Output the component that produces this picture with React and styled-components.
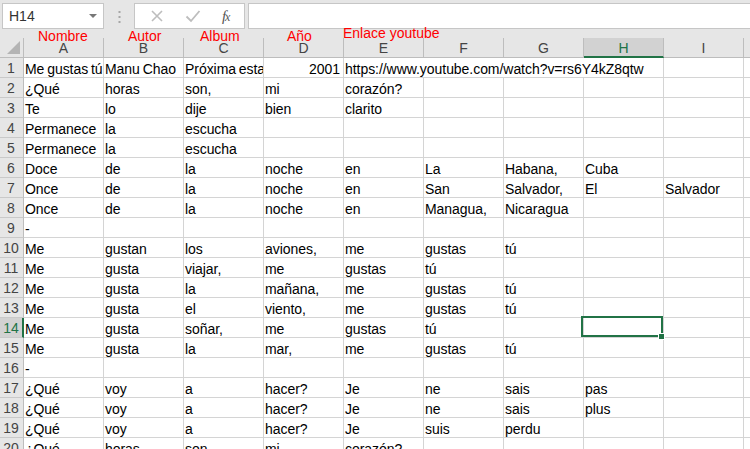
import React from "react";
import styled, { createGlobalStyle, css } from "styled-components";

const GlobalStyle = createGlobalStyle`
  body {
    margin: 0;
    background: #ffffff;
    overflow: hidden;
    font-family: "Liberation Sans", Arial, sans-serif;
  }
`;

const GREEN = "#217346";
const COLS = ["A", "B", "C", "D", "E", "F", "G", "H", "I", "J"];
const SEL_COL = 7; // H
const SEL_ROW = 14;

const Page = styled.div`
  position: relative;
  width: 750px;
  height: 449px;
  overflow: hidden;
  background: #ffffff;
`;

const FormulaBar = styled.div`
  display: flex;
  align-items: flex-start;
  height: 38px;
  padding: 3px 0 0 2px;
  box-sizing: border-box;
  background: #e6e6e6;
`;

const NameBox = styled.div`
  display: flex;
  align-items: center;
  justify-content: space-between;
  width: 102px;
  height: 26px;
  box-sizing: border-box;
  padding: 0 6px 0 6px;
  background: #ffffff;
  border: 1px solid #c6c6c6;
  font-size: 14px;
  color: #333333;
`;

const Caret = styled.span`
  width: 0;
  height: 0;
  border-left: 4px solid transparent;
  border-right: 4px solid transparent;
  border-top: 4px solid #777777;
`;

const Grip = styled.div`
  display: flex;
  justify-content: center;
  width: 30px;
  padding-top: 8px;
`;

const ButtonsBox = styled.div`
  display: flex;
  align-items: center;
  justify-content: space-around;
  width: 111px;
  height: 26px;
  box-sizing: border-box;
  padding: 0 4px;
  background: #ffffff;
  border: 1px solid #c6c6c6;
`;

const Fx = styled.span`
  font-family: "Liberation Serif", "Times New Roman", serif;
  font-style: italic;
  font-size: 15px;
  color: #555555;
  letter-spacing: -1px;
  & small {
    font-size: 12px;
  }
`;

const FormulaInput = styled.div`
  flex: 1;
  height: 26px;
  margin-left: 3px;
  box-sizing: border-box;
  background: #ffffff;
  border: 1px solid #c6c6c6;
  border-right: none;
`;

const Grid = styled.div`
  display: grid;
  grid-template-columns: 24px repeat(10, 80px);
  grid-auto-rows: 20px;
  font-size: 14px;
`;

const Corner = styled.div`
  position: relative;
  background: #e6e6e6;
  border-right: 1px solid #bdbdbd;
  border-bottom: 1px solid #bdbdbd;
  box-sizing: border-box;
  &::after {
    content: "";
    position: absolute;
    right: 3px;
    bottom: 3px;
    width: 0;
    height: 0;
    border-left: 13px solid transparent;
    border-bottom: 13px solid #b4b4b4;
  }
`;

const ColHeader = styled.div`
  box-sizing: border-box;
  background: ${(p) => (p.$active ? "#d2d2d2" : "#e6e6e6")};
  color: ${(p) => (p.$active ? GREEN : "#444444")};
  border-right: 1px solid #bdbdbd;
  border-bottom: ${(p) => (p.$active ? `2px solid ${GREEN}` : "1px solid #bdbdbd")};
  text-align: center;
  line-height: 20px;
`;

const RowHeader = styled.div`
  box-sizing: border-box;
  background: ${(p) => (p.$active ? "#d2d2d2" : "#e6e6e6")};
  color: ${(p) => (p.$active ? GREEN : "#444444")};
  border-right: ${(p) => (p.$active ? `2px solid ${GREEN}` : "1px solid #bdbdbd")};
  border-bottom: 1px solid #c9c9c9;
  text-align: center;
  line-height: 18px;
  padding-top: 1px;
  padding-right: ${(p) => (p.$active ? "0" : "1px")};
`;

const Cell = styled.div`
  position: relative;
  box-sizing: border-box;
  grid-column: span ${(p) => p.$span || 1};
  border-right: 1px solid #d4d4d4;
  border-bottom: 1px solid #d4d4d4;
  padding: 2px ${(p) => (p.$right ? "3px" : "0")} 0 1px;
  line-height: 18px;
  letter-spacing: -0.05px;
  word-spacing: -1px;
  color: #000000;
  white-space: nowrap;
  overflow: ${(p) => (p.$selected ? "visible" : "hidden")};
  text-align: ${(p) => (p.$right ? "right" : "left")};
  ${(p) =>
    p.$selected &&
    css`
      z-index: 2;
      &::before {
        content: "";
        position: absolute;
        top: -2px;
        left: -3px;
        right: 0;
        bottom: 0;
        border: 2px solid ${GREEN};
      }
      &::after {
        content: "";
        position: absolute;
        right: -2px;
        bottom: -3px;
        width: 5px;
        height: 5px;
        background: ${GREEN};
        border: 1px solid #ffffff;
      }
    `}
`;

const Label = styled.span`
  position: absolute;
  top: ${(p) => p.$top}px;
  left: ${(p) => p.$left}px;
  font-size: 14px;
  line-height: 16px;
  color: #ff0000;
  white-space: nowrap;
  z-index: 3;
`;

const labels = [
  { text: "Nombre", left: 38, top: 28 },
  { text: "Autor", left: 128, top: 28 },
  { text: "Album", left: 200, top: 28 },
  { text: "Año", left: 287, top: 28 },
  { text: "Enlace youtube", left: 343, top: 25 },
];

const rows = [
  ["Me gustas tú", "Manu Chao", "Próxima estación: Esperanza", { v: "2001", right: true }, { v: "https://www.youtube.com/watch?v=rs6Y4kZ8qtw", span: 4 }],
  ["¿Qué", "horas", "son,", "mi", "corazón?"],
  ["Te", "lo", "dije", "bien", "clarito"],
  ["Permanece", "la", "escucha"],
  ["Permanece", "la", "escucha"],
  ["Doce", "de", "la", "noche", "en", "La", "Habana,", "Cuba"],
  ["Once", "de", "la", "noche", "en", "San", "Salvador,", "El", "Salvador"],
  ["Once", "de", "la", "noche", "en", "Managua,", "Nicaragua"],
  ["-"],
  ["Me", "gustan", "los", "aviones,", "me", "gustas", "tú"],
  ["Me", "gusta", "viajar,", "me", "gustas", "tú"],
  ["Me", "gusta", "la", "mañana,", "me", "gustas", "tú"],
  ["Me", "gusta", "el", "viento,", "me", "gustas", "tú"],
  ["Me", "gusta", "soñar,", "me", "gustas", "tú"],
  ["Me", "gusta", "la", "mar,", "me", "gustas", "tú"],
  ["-"],
  ["¿Qué", "voy", "a", "hacer?", "Je", "ne", "sais", "pas"],
  ["¿Qué", "voy", "a", "hacer?", "Je", "ne", "sais", "plus"],
  ["¿Qué", "voy", "a", "hacer?", "Je", "suis", "perdu"],
  ["¿Qué", "horas", "son,", "mi", "corazón?"],
];

const renderRow = (row, r) => {
  const rowNum = r + 1;
  const cells = [];
  let c = 0;
  while (c < COLS.length) {
    const raw = row[c];
    const item = raw && typeof raw === "object" ? raw : { v: raw || "" };
    const span = item.span || 1;
    cells.push(
      <Cell
        key={c}
        $span={span}
        $right={item.right}
        $selected={rowNum === SEL_ROW && c === SEL_COL}
      >
        {item.v}
      </Cell>
    );
    c += span;
  }
  return (
    <React.Fragment key={rowNum}>
      <RowHeader $active={rowNum === SEL_ROW}>{rowNum}</RowHeader>
      {cells}
    </React.Fragment>
  );
};

const App = () => {
  return (
    <Page>
      <GlobalStyle />
      <FormulaBar>
        <NameBox>
          <span>H14</span>
          <Caret />
        </NameBox>
        <Grip>
          <svg width="3" height="12" viewBox="0 0 3 12">
            <rect x="0.5" y="0" width="2" height="2" fill="#a6a6a6" />
            <rect x="0.5" y="5" width="2" height="2" fill="#a6a6a6" />
            <rect x="0.5" y="10" width="2" height="2" fill="#a6a6a6" />
          </svg>
        </Grip>
        <ButtonsBox>
          <svg width="14" height="14" viewBox="0 0 14 14">
            <path d="M2 2 L12 12 M12 2 L2 12" stroke="#bdbdbd" strokeWidth="1.6" fill="none" />
          </svg>
          <svg width="16" height="14" viewBox="0 0 16 14">
            <path d="M1.5 7.5 L6 12 L14.5 2" stroke="#bdbdbd" strokeWidth="1.8" fill="none" />
          </svg>
          <Fx>
            f<small>x</small>
          </Fx>
        </ButtonsBox>
        <FormulaInput />
      </FormulaBar>
      {labels.map((l) => (
        <Label key={l.text} $left={l.left} $top={l.top}>
          {l.text}
        </Label>
      ))}
      <Grid>
        <Corner />
        {COLS.map((col, i) => (
          <ColHeader key={col} $active={i === SEL_COL}>
            {col}
          </ColHeader>
        ))}
        {rows.map(renderRow)}
      </Grid>
    </Page>
  );
};

export default App;
